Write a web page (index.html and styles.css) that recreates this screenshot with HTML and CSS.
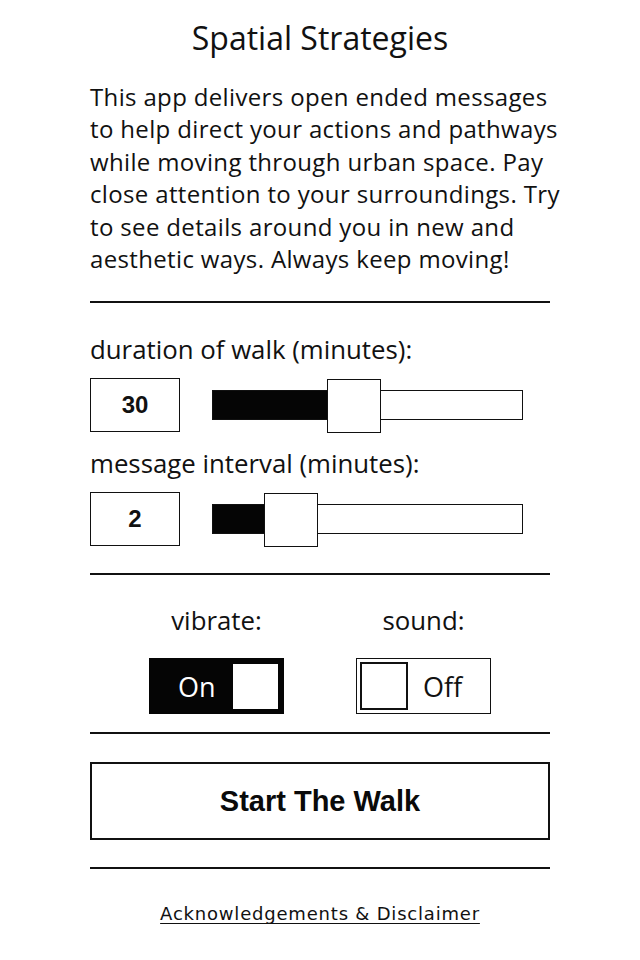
FILE: index.html
```
<!DOCTYPE html>
<html lang="en">
<head>
<meta charset="utf-8">
<title>Spatial Strategies</title>
<link rel="stylesheet" href="styles.css">
</head>
<body>
<main class="page">
  <h1 class="title">Spatial Strategies</h1>
  <p class="intro"><span class="line">This app delivers open ended messages</span> <span class="line">to help direct your actions and pathways</span> <span class="line">while moving through urban space. Pay</span> <span class="line">close attention to your surroundings. Try</span> <span class="line">to see details around you in new and</span> <span class="line">aesthetic ways. Always keep moving!</span></p>
  <hr class="rule rule-first">

  <div class="label label-first">duration of walk (minutes):</div>
  <div class="slider-row">
    <div class="value-box">30</div>
    <div class="track">
      <div class="fill" style="width:115px"></div>
      <div class="thumb" style="left:115px"></div>
    </div>
  </div>

  <div class="label label-second">message interval (minutes):</div>
  <div class="slider-row">
    <div class="value-box">2</div>
    <div class="track">
      <div class="fill" style="width:52px"></div>
      <div class="thumb" style="left:52px"></div>
    </div>
  </div>

  <hr class="rule rule-second">

  <div class="toggles">
    <div class="toggle-col">
      <div class="toggle-label">vibrate:</div>
      <div class="toggle toggle-on">
        <span class="toggle-text">On</span>
        <span class="knob knob-on"></span>
      </div>
    </div>
    <div class="toggle-col">
      <div class="toggle-label">sound:</div>
      <div class="toggle toggle-off">
        <span class="knob knob-off"></span>
        <span class="toggle-text">Off</span>
      </div>
    </div>
  </div>

  <hr class="rule rule-third">

  <button class="start" type="button">Start The Walk</button>

  <hr class="rule rule-fourth">

  <a class="ack" href="#">Acknowledgements &amp; Disclaimer</a>
</main>
</body>
</html>
```

FILE: styles.css
```
html, body {
  margin: 0;
  padding: 0;
  background: #ffffff;
}

body {
  width: 640px;
  height: 960px;
  color: #111111;
  font-family: "Open Sans", "Noto Sans", sans-serif;
}

.page {
  display: flex;
  flex-direction: column;
  padding: 18px 90px 0 90px;
}

.title {
  margin: 0;
  font-size: 32px;
  font-weight: 400;
  line-height: 40px;
  text-align: center;
}

.intro {
  margin: 23px 0 0 0;
  font-size: 24px;
  line-height: 32.4px;
  letter-spacing: 0.35px;
}

.intro .line {
  display: block;
  white-space: nowrap;
}

.rule {
  width: 100%;
  height: 0;
  margin: 0;
  border: 0;
  border-top: 2px solid #111111;
}

.rule-first { margin-top: 26px; }
.rule-second { margin-top: 27px; }
.rule-third { margin-top: 18px; }
.rule-fourth { margin-top: 27px; }

.label {
  font-size: 25.8px;
  line-height: 32px;
}

.label-first { margin-top: 30px; }
.label-second { margin-top: 15px; }

.slider-row {
  display: flex;
  align-items: center;
  margin-top: 13px;
  height: 54px;
}

.value-box {
  box-sizing: border-box;
  width: 90px;
  height: 54px;
  border: 1px solid #111111;
  display: flex;
  align-items: center;
  justify-content: center;
  font-family: "Liberation Sans", Arial, sans-serif;
  font-weight: 700;
  font-size: 24px;
}

.track {
  position: relative;
  box-sizing: border-box;
  margin-left: 32px;
  width: 311px;
  height: 30px;
  border: 1px solid #111111;
}

.fill {
  height: 100%;
  background: #050505;
}

.thumb {
  position: absolute;
  top: -12px;
  box-sizing: border-box;
  width: 54px;
  height: 54px;
  margin-left: -1px;
  background: #ffffff;
  border: 1px solid #111111;
}

.toggles {
  display: flex;
  justify-content: center;
  gap: 72px;
  margin-top: 29px;
}

.toggle-col {
  display: flex;
  flex-direction: column;
  align-items: center;
  width: 135px;
}

.toggle-label {
  font-size: 25.8px;
  line-height: 32px;
}

.toggle {
  box-sizing: border-box;
  margin-top: 22px;
  width: 135px;
  height: 56px;
  display: flex;
  align-items: center;
}

.toggle-on {
  background: #050505;
  color: #ffffff;
  padding: 0 6px 0 29px;
  justify-content: space-between;
}

.toggle-off {
  border: 1px solid #111111;
  padding: 0 3px;
  background: #ffffff;
}

.toggle-text {
  font-size: 27px;
  line-height: 1;
}

.toggle-off .toggle-text {
  margin-left: 15px;
}

.knob {
  box-sizing: border-box;
  display: block;
  background: #ffffff;
}

.knob-on {
  width: 45px;
  height: 45px;
}

.knob-off {
  width: 48px;
  height: 48px;
  border: 2px solid #111111;
}

.start {
  box-sizing: border-box;
  margin: 28px 0 0 0;
  width: 100%;
  height: 78px;
  background: #ffffff;
  border: 2px solid #111111;
  color: #0a0a0a;
  font-family: "Liberation Sans", Arial, sans-serif;
  font-weight: 700;
  font-size: 29px;
  padding: 0;
  cursor: pointer;
}

.ack {
  align-self: center;
  margin-top: 33px;
  font-family: "DejaVu Sans", Verdana, sans-serif;
  font-size: 18px;
  line-height: 24px;
  letter-spacing: 0.8px;
  color: #111111;
  text-decoration: underline;
  text-underline-offset: 3px;
}
```
